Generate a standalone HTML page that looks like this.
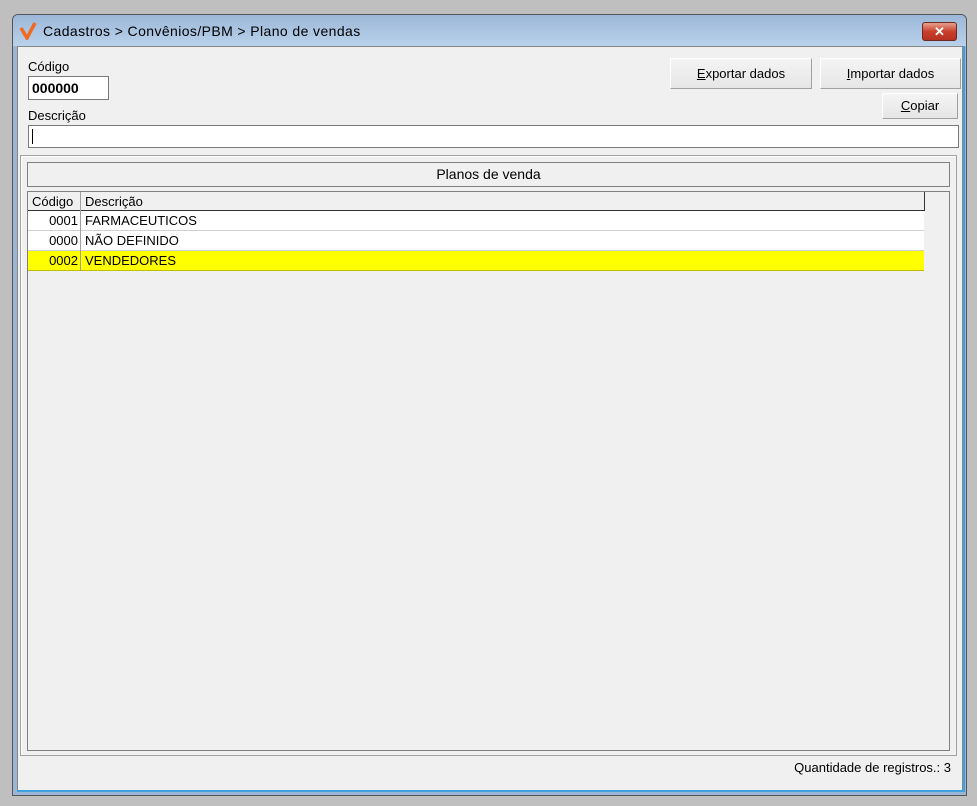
<!DOCTYPE html><html><head><style>
body{margin:0;width:977px;height:806px;background:#bfbfbf;position:relative;overflow:hidden;font-family:"Liberation Sans",sans-serif;font-size:13px;color:#000}
.a{position:absolute;box-sizing:border-box}
.btn{background:linear-gradient(#f4f4f4,#e6e6e6);border:1px solid #fff;border-right-color:#a0a0a0;border-bottom-color:#a0a0a0;text-align:center;font-size:13px}
</style></head><body>
<div class="a" style="left:12px;top:14px;width:955px;height:782px;border:1px solid #555;border-radius:6px 6px 0 0;background:#9ab5d6"></div>
<div class="a" style="left:13px;top:15px;width:953px;height:31px;background:linear-gradient(#9cb7d8,#b9d1ea);border-radius:5px 5px 0 0"></div>
<svg class="a" style="left:19px;top:22px" width="18" height="18"><path d="M2 6 L8 16 L16 1" stroke="#f26a21" stroke-width="3.5" fill="none"/></svg>
<div class="a" style="left:43px;top:23px;font-size:14px;letter-spacing:0.4px">Cadastros &gt; Convênios/PBM &gt; Plano de vendas</div>
<div class="a" style="left:922px;top:22px;width:35px;height:19px;border:1px solid #6b2a20;border-radius:3px;background:linear-gradient(#e8a090,#c8402c 50%,#b83020);color:#fff;font-weight:bold;text-align:center;line-height:17px;font-size:13px">✕</div>
<div class="a" style="left:17px;top:46px;width:946px;height:745px;background:#f0f0f0;border:1px solid #888"></div>
<div class="a" style="left:963px;top:46px;width:2px;height:746px;background:#3fa0e0"></div>
<div class="a" style="left:17px;top:790px;width:948px;height:2px;background:#3fa0e0"></div>
<div class="a" style="left:28px;top:59px">Código</div>
<div class="a" style="left:28px;top:76px;width:81px;height:24px;background:#fff;border:1px solid #7a7a7a;font-weight:bold;font-size:14px;padding:3px 0 0 3px">000000</div>
<div class="a" style="left:28px;top:108px">Descrição</div>
<div class="a" style="left:28px;top:125px;width:931px;height:23px;background:#fff;border:1px solid #7a7a7a"><div class="a" style="left:3px;top:3px;width:1px;height:15px;background:#000"></div></div>
<div class="a btn" style="left:670px;top:58px;width:142px;height:31px;line-height:29px"><u>E</u>xportar dados</div>
<div class="a btn" style="left:820px;top:58px;width:141px;height:31px;line-height:29px"><u>I</u>mportar dados</div>
<div class="a btn" style="left:882px;top:93px;width:76px;height:26px;line-height:24px"><u>C</u>opiar</div>
<div class="a" style="left:20px;top:155px;width:937px;height:601px;border:1px solid #a0a0a0;box-shadow:inset 1px 1px #fff"></div>
<div class="a" style="left:27px;top:162px;width:923px;height:25px;border:1px solid #808080;background:#f0f0f0;text-align:center;font-size:14px;line-height:23px">Planos de venda</div>
<div class="a" style="left:27px;top:191px;width:923px;height:560px;border:1px solid #808080;background:#f0f0f0"></div>
<div class="a" style="left:28px;top:192px;width:897px;height:19px;border-bottom:1px solid #333;border-right:1px solid #333;background:#f0f0f0"></div>
<div class="a" style="left:32px;top:194px">Código</div>
<div class="a" style="left:80px;top:192px;width:1px;height:79px;background:#a0a0a0"></div>
<div class="a" style="left:85px;top:194px">Descrição</div>
<div class="a" style="left:28px;top:211px;width:896px;height:20px;background:#fff;border-bottom:1px solid #d0d0d0"></div>
<div class="a" style="left:28px;top:231px;width:896px;height:20px;background:#fff;border-bottom:1px solid #d0d0d0"></div>
<div class="a" style="left:28px;top:251px;width:896px;height:20px;background:#ffff00;border-bottom:1px solid #c0c000"></div>
<div class="a" style="left:80px;top:211px;width:1px;height:60px;background:#a0a0a0"></div>
<div class="a" style="left:28px;top:213px;width:50px;text-align:right">0001</div><div class="a" style="left:85px;top:213px">FARMACEUTICOS</div>
<div class="a" style="left:28px;top:233px;width:50px;text-align:right">0000</div><div class="a" style="left:85px;top:233px">NÃO DEFINIDO</div>
<div class="a" style="left:28px;top:253px;width:50px;text-align:right">0002</div><div class="a" style="left:85px;top:253px">VENDEDORES</div>
<div class="a" style="left:700px;top:760px;width:251px;text-align:right">Quantidade de registros.: 3</div>
</body></html>
